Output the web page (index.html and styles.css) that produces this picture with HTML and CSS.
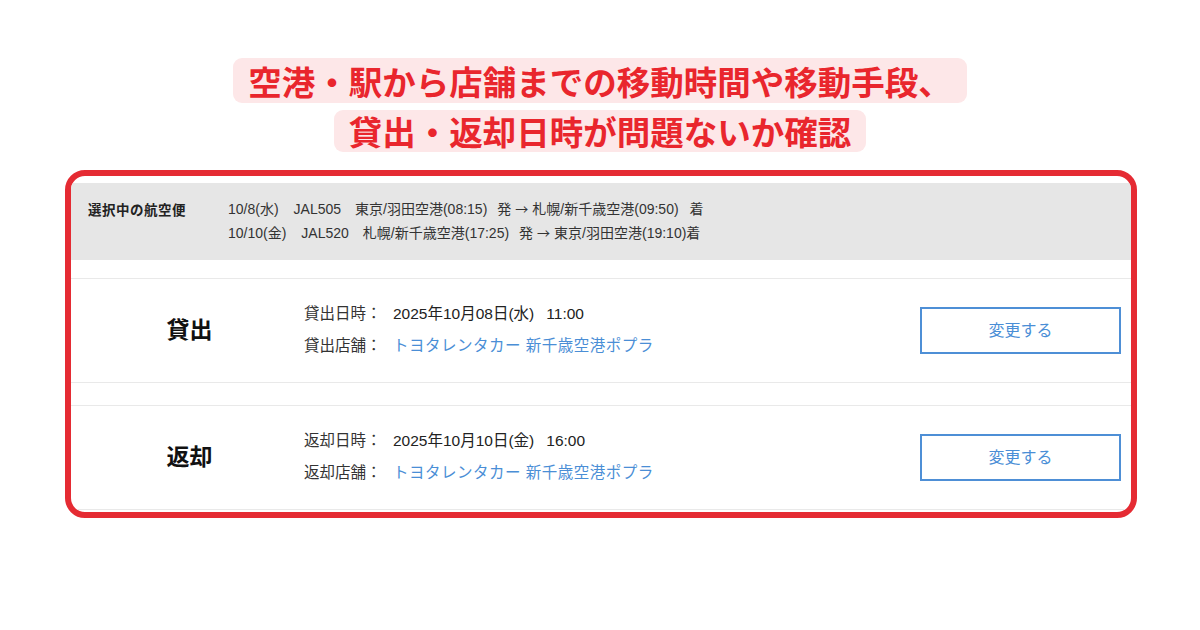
FILE: index.html
```html
<!DOCTYPE html>
<html lang="ja">
<head>
<meta charset="utf-8">
<title>貸出・返却の確認</title>
<link rel="stylesheet" href="styles.css">
</head>
<body>
  <div class="headline">
    <div class="headline-row"><span class="headline-text">空港・駅から店舗までの移動時間や移動手段、</span></div>
    <div class="headline-row"><span class="headline-text second">貸出・返却日時が問題ないか確認</span></div>
  </div>

  <div class="frame">
    <div class="flight-band">
      <div class="flight-label">選択中の航空便</div>
      <div class="flight-list">
        <div class="flight-line">
          <span class="f-date">10/8(水)</span>
          <span class="f-no">JAL505</span>
          <span class="f-from">東京/羽田空港(08:15)</span>
          <span class="f-dep">発</span>
          <span class="f-arrow">→</span>
          <span class="f-to">札幌/新千歳空港(09:50)</span>
          <span class="f-arr">着</span>
        </div>
        <div class="flight-line">
          <span class="f-date">10/10(金)</span>
          <span class="f-no">JAL520</span>
          <span class="f-from">札幌/新千歳空港(17:25)</span>
          <span class="f-dep">発</span>
          <span class="f-arrow">→</span>
          <span class="f-to">東京/羽田空港(19:10)着</span>
        </div>
      </div>
    </div>

    <div class="section">
      <div class="section-title">貸出</div>
      <div class="section-detail">
        <div class="detail-row"><span class="detail-label">貸出日時：</span><span class="detail-value">2025年10月08日(水)<span class="time">11:00</span></span></div>
        <div class="detail-row"><span class="detail-label">貸出店舗：</span><span class="detail-link">トヨタレンタカー 新千歳空港ポプラ</span></div>
      </div>
      <div class="section-action"><button class="change-btn" type="button">変更する</button></div>
    </div>

    <div class="section second">
      <div class="section-title">返却</div>
      <div class="section-detail">
        <div class="detail-row"><span class="detail-label">返却日時：</span><span class="detail-value">2025年10月10日(金)<span class="time">16:00</span></span></div>
        <div class="detail-row"><span class="detail-label">返却店舗：</span><span class="detail-link">トヨタレンタカー 新千歳空港ポプラ</span></div>
      </div>
      <div class="section-action"><button class="change-btn" type="button">変更する</button></div>
    </div>
  </div>
</body>
</html>
```

FILE: styles.css
```css
* {
  box-sizing: border-box;
}

html,
body {
  margin: 0;
  padding: 0;
  background: #ffffff;
}

body {
  width: 1200px;
  height: 630px;
  overflow: hidden;
  font-family: "Liberation Sans", "Noto Sans CJK JP", sans-serif;
  color: #333333;
}

/* Headline with highlighted lines */
.headline {
  padding-top: 58px;
  text-align: center;
}

.headline-row + .headline-row {
  margin-top: 7px;
}

.headline-text {
  display: inline-block;
  height: 45px;
  line-height: 45px;
  padding: 0 15px;
  font-family: "Noto Sans CJK JP", sans-serif;
  font-size: 33.5px;
  font-weight: 700;
  color: #e9262d;
  background: #fde7e8;
  border-radius: 9px;
}

.headline-text.second {
  height: 42px;
  line-height: 42px;
}

/* Red outlined panel */
.frame {
  margin: 18px 0 0 65px;
  width: 1072px;
  height: 348px;
  border: 6px solid #e52b33;
  border-radius: 20px;
  padding-top: 7px;
  overflow: hidden;
}

/* Selected flights band */
.flight-band {
  display: flex;
  height: 77px;
  background: #e6e6e6;
  padding: 14px 0 0 17px;
}

.flight-label {
  width: 140px;
  font-family: "Noto Sans CJK JP", sans-serif;
  font-size: 13.5px;
  letter-spacing: 0.5px;
  font-weight: 700;
  line-height: 24px;
  color: #222222;
}

.flight-list {
  font-size: 14px;
  line-height: 24px;
  color: #333333;
}

.flight-line {
  display: flex;
  white-space: nowrap;
}

.f-no {
  margin-left: 15px;
}

.f-from {
  margin-left: 14px;
}

.f-dep {
  margin-left: 10px;
}

.f-arrow {
  margin-left: 4px;
  font-family: "Noto Sans CJK JP", sans-serif;
  font-size: 13px;
}

.f-to {
  margin-left: 4px;
}

.f-arr {
  margin-left: 11px;
}

/* Pick-up / return sections */
.section {
  display: flex;
  align-items: center;
  height: 105px;
  margin-top: 18px;
  border-top: 1px solid #e9e9e9;
  border-bottom: 1px solid #e9e9e9;
}

.section.second {
  margin-top: 22px;
}

.section-title {
  width: 233px;
  padding-left: 4px;
  text-align: center;
  font-family: "Noto Sans CJK JP", sans-serif;
  font-size: 23px;
  font-weight: 700;
  color: #111111;
  margin-top: -6px;
}

.section-detail {
  flex: 1;
  font-size: 15.5px;
  line-height: 32px;
  margin-top: -2px;
}

.detail-row {
  white-space: nowrap;
}

.detail-label {
  display: inline-block;
  width: 89px;
  color: #333333;
}

.detail-value {
  color: #222222;
}

.time {
  margin-left: 12px;
}

.detail-link {
  color: #4a8ed6;
  letter-spacing: 0.5px;
}

.section-action {
  padding-right: 10px;
}

.change-btn {
  width: 201px;
  height: 47px;
  background: #ffffff;
  border: 2px solid #4e8fd6;
  border-radius: 0;
  font-family: "Noto Sans CJK JP", sans-serif;
  font-size: 16px;
  color: #4a8ed6;
  padding: 0 0 3px;
}
```
